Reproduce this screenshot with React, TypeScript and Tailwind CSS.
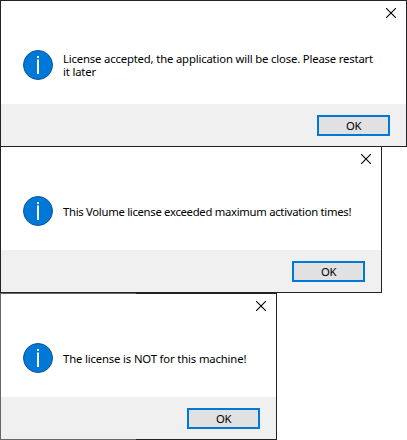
type DialogProps = {
  lines: string[];
  frame: string;
  spacing: string;
  faded?: boolean;
};

function InfoIcon() {
  return (
    <svg className="block h-[30px] w-[30px] shrink-0" viewBox="0 0 30 30" aria-hidden="true">
      <circle cx="15" cy="15" r="14.5" fill="#0078d7" stroke="#0b569b" strokeWidth="1" />
      <path d="M14 6h2v2h-2z" fill="#fff" />
      <path d="M14 9.5h2v14.5h-2z" fill="#fff" />
    </svg>
  );
}

function CloseIcon() {
  return (
    <svg className="block h-[10px] w-[10px]" viewBox="0 0 10 10" aria-hidden="true">
      <path d="M0 0l10 10M10 0l-10 10" stroke="#000" strokeWidth="1.1" fill="none" />
    </svg>
  );
}

function Dialog({ lines, frame, spacing, faded }: DialogProps) {
  return (
    <section className={`flex h-[147px] flex-col border border-[#232326] bg-white ${frame}`}>
      {faded && <div className="absolute -top-px -left-px h-[147px] w-[136px] border border-r-0 border-[#666]" />}
      <header className="flex h-[17px] shrink-0 items-end justify-end pr-[10px]">
        <button aria-label="Close">
          <CloseIcon />
        </button>
      </header>
      <div className="flex h-[86px] shrink-0 items-start pt-8 pl-[22px]">
        <div className="flex items-center gap-[10px]">
          <InfoIcon />
          <div className={`whitespace-nowrap text-[11.3px] leading-[13px] text-black ${spacing}`}>
            {lines.map((line) => (
              <p key={line}>{line}</p>
            ))}
          </div>
        </div>
      </div>
      <footer className="flex h-[42px] shrink-0 items-center justify-end bg-[#f0f0f0] pr-4">
        <button className="h-[21px] w-[73px] border-2 border-[#0078d7] bg-[#e1e1e1] text-[11.3px] leading-[17px] tracking-[-0.3px]">
          OK
        </button>
      </footer>
    </section>
  );
}

export default function App() {
  return (
    <main className="flex h-[440px] w-[407px] flex-col items-start overflow-hidden bg-white font-['Noto_Sans',sans-serif]">
      <Dialog
        frame="w-[407px]"
        spacing="tracking-[-0.165px]"
        lines={["License accepted, the application will be close. Please restart", "it later"]}
      />
      <Dialog
        frame="-mt-px w-[382px]"
        spacing="tracking-[-0.295px]"
        lines={["This Volume license exceeded maximum activation times!"]}
      />
      <Dialog frame="relative w-[277px]" spacing="tracking-[-0.15px]" faded lines={["The license is NOT for this machine!"]} />
    </main>
  );
}
